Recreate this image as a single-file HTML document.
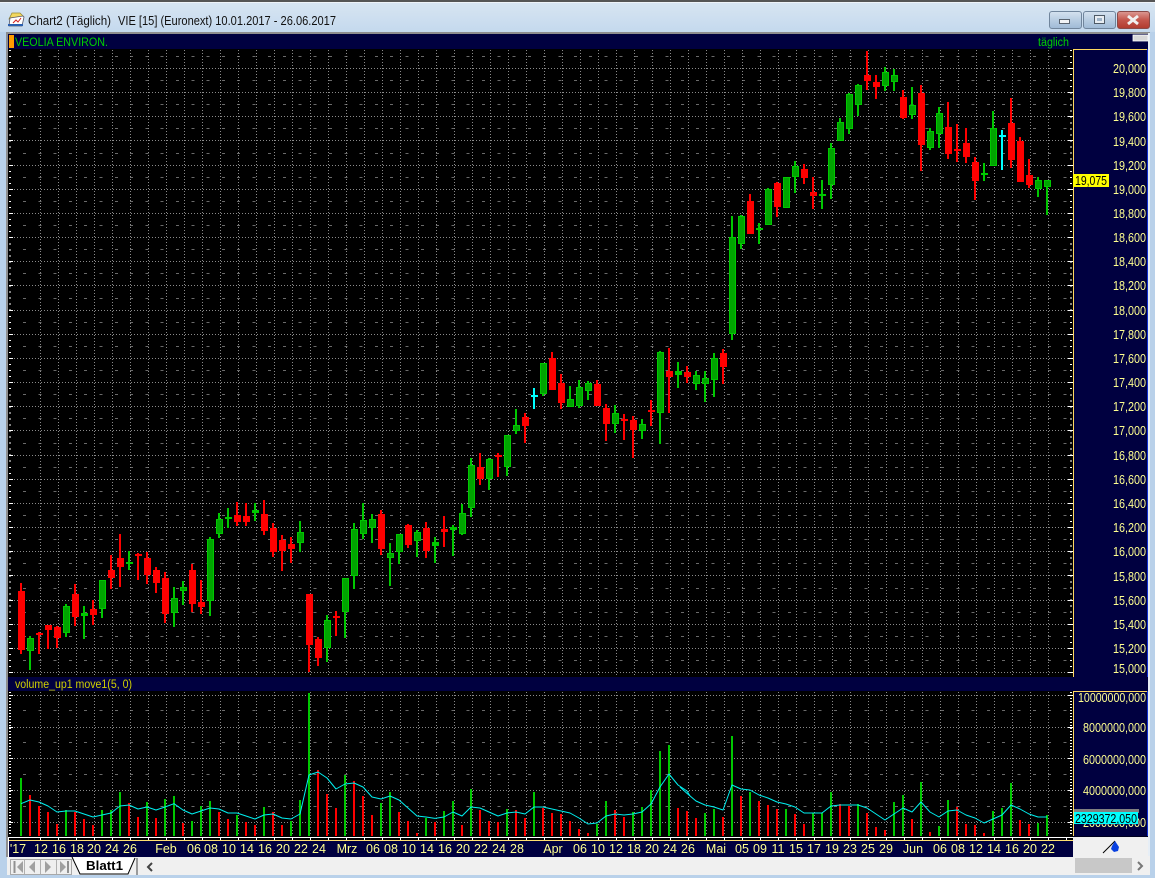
<!DOCTYPE html>
<html><head><meta charset="utf-8"><title>Chart2</title>
<style>html,body{margin:0;padding:0;background:#b9d1ea;overflow:hidden}svg{display:block;width:1155px;height:878px}text{font-family:"Liberation Sans",sans-serif}</style></head>
<body>
<svg xmlns="http://www.w3.org/2000/svg" width="1155" height="878" viewBox="0 0 1155 878">
<defs>
<linearGradient id="tb" x1="0" y1="0" x2="0" y2="1"><stop offset="0" stop-color="#d9e6f2"/><stop offset="1" stop-color="#c4d9ee"/></linearGradient>
<linearGradient id="bt" x1="0" y1="0" x2="0" y2="1"><stop offset="0" stop-color="#d5e2ef"/><stop offset=".5" stop-color="#b8cde2"/><stop offset="1" stop-color="#9fbad6"/></linearGradient>
<linearGradient id="cl" x1="0" y1="0" x2="0" y2="1"><stop offset="0" stop-color="#dc9a94"/><stop offset=".5" stop-color="#c4564c"/><stop offset="1" stop-color="#b03a2e"/></linearGradient>
</defs>
<rect width="1155" height="878" fill="#b9d1ea"/>
<rect y="0" width="1155" height="32" fill="url(#tb)"/>
<rect width="1155" height="2" fill="#555"/><rect y="2" width="1155" height="1" fill="#eef3f8"/>
<!-- title icon -->
<path d="M9 19l3-6h8l3 3-2 3z" fill="#f2d860" stroke="#9a8a30" stroke-width=".8"/>
<path d="M10 18l13-2 1 1-2 9H9z" fill="#fff" stroke="#556" stroke-width=".8"/>
<path d="M13 23l3-3 2 2 3-4" fill="none" stroke="#d02020"/>
<rect x="8" y="24" width="15" height="2" fill="#2a5fb0"/>
<text x="28" y="25" font-size="12.500" fill="#111" textLength="83" lengthAdjust="spacingAndGlyphs">Chart2 (Täglich)</text>
<text x="118" y="25" font-size="12.500" fill="#111" textLength="218" lengthAdjust="spacingAndGlyphs">VIE [15] (Euronext) 10.01.2017 - 26.06.2017</text>
<!-- window buttons -->
<rect x="1049.500" y="11.500" width="32" height="17" rx="2.500" fill="url(#bt)" stroke="#70859c"/>
<rect x="1059.500" y="19.500" width="10" height="4" fill="#f2f4f6" stroke="#5a6470"/>
<rect x="1083.500" y="11.500" width="32" height="17" rx="2.500" fill="url(#bt)" stroke="#70859c"/>
<rect x="1094.500" y="15.500" width="10" height="8" fill="#e8edf2" stroke="#4e5a66"/><rect x="1097" y="18" width="5" height="3" fill="#9fb4c9"/>
<rect x="1117.500" y="11.500" width="32" height="17" rx="2.500" fill="url(#cl)" stroke="#8a4a48"/>
<path d="M1128 16l10 8M1138 16l-10 8" stroke="#f0f0f0" stroke-width="3"/>
<!-- frame -->
<rect x="7" y="32" width="1143" height="843" fill="#f0f0f0"/>
<rect x="6" y="32" width="1144" height="2" fill="#8e8e8e"/>
<rect x="6" y="32" width="2" height="825" fill="#8e8e8e"/>
<rect x="1148" y="33" width="2" height="823" fill="#e6eef6"/>
<!-- chart backgrounds -->
<rect x="8" y="34" width="1140" height="16" fill="#000040"/>
<rect x="8" y="49" width="1065" height="628" fill="#000"/>
<rect x="8" y="677" width="1140" height="14" fill="#000040"/>
<rect x="8" y="691" width="1065" height="149" fill="#000"/>
<rect x="1073" y="49" width="75" height="628" fill="#000040"/>
<rect x="1073" y="691" width="75" height="146" fill="#000040"/>
<path d="M1073.500 50V677M1073 49.500H1147M1073.500 692V836M1073 691.500H1147" stroke="#ffd860" fill="none"/>
<path d="M1147.500 49V677M1147.500 691V837" stroke="#1030d0" fill="none"/>
<path d="M1073 836.500H1148" stroke="#000020"/>
<rect x="1073" y="837" width="75" height="20" fill="#f0f0f0"/>
<rect x="9" y="35" width="5" height="13" fill="#ff9c00"/>
<rect x="1133" y="35" width="15" height="6" fill="#d8d8d8" stroke="#fff" stroke-width=".8"/>
<text x="15" y="46" font-size="11.500" fill="#00d000" textLength="93" lengthAdjust="spacingAndGlyphs">VEOLIA ENVIRON.</text>
<text x="1038" y="46" font-size="11.500" fill="#00d000" textLength="31" lengthAdjust="spacingAndGlyphs">täglich</text>
<text x="15" y="688" font-size="11.500" fill="#d0d000" textLength="117" lengthAdjust="spacingAndGlyphs">volume_up1 move1(5, 0)</text>
<!-- grid -->
<g fill="none" stroke="#8a8a8a">
<path stroke-dasharray="1 2" d="M14 68.500H1072M14 92.500H1072M14 116.500H1072M14 140.500H1072M14 165.500H1072M14 189.500H1072M14 213.500H1072M14 237.500H1072M14 261.500H1072M14 285.500H1072M14 310.500H1072M14 334.500H1072M14 358.500H1072M14 382.500H1072M14 406.500H1072M14 430.500H1072M14 455.500H1072M14 479.500H1072M14 503.500H1072M14 527.500H1072M14 551.500H1072M14 575.500H1072M14 600.500H1072M14 624.500H1072M14 648.500H1072M14 672.500H1072M14 695.500H1072M14 727.500H1072M14 758.500H1072M14 790.500H1072M14 822.500H1072"/>
<path stroke="#6a6a6a" shape-rendering="crispEdges" stroke-dasharray="3 12.300" d="M23 56.500H1068M23 80.500H1068M23 104.500H1068M23 128.500H1068M23 153.500H1068M23 177.500H1068M23 201.500H1068M23 225.500H1068M23 249.500H1068M23 273.500H1068M23 298.500H1068M23 322.500H1068M23 346.500H1068M23 370.500H1068M23 394.500H1068M23 418.500H1068M23 443.500H1068M23 467.500H1068M23 491.500H1068M23 515.500H1068M23 539.500H1068M23 563.500H1068M23 588.500H1068M23 612.500H1068M23 636.500H1068M23 660.500H1068M23 710.500H1068M23 742.500H1068M23 774.500H1068M23 806.500H1068"/>
<path stroke-dasharray="1 2" d="M40.500 50V676M58.500 50V676M76.500 50V676M94.500 50V676M112.500 50V676M130.500 50V676M148.500 50V676M166.500 50V676M184.500 50V676M202.500 50V676M220.500 50V676M238.500 50V676M256.500 50V676M274.500 50V676M292.500 50V676M310.500 50V676M328.500 50V676M346.500 50V676M364.500 50V676M382.500 50V676M400.500 50V676M418.500 50V676M436.500 50V676M454.500 50V676M472.500 50V676M490.500 50V676M508.500 50V676M526.500 50V676M544.500 50V676M562.500 50V676M580.500 50V676M598.500 50V676M616.500 50V676M634.500 50V676M652.500 50V676M670.500 50V676M688.500 50V676M706.500 50V676M724.500 50V676M742.500 50V676M760.500 50V676M778.500 50V676M796.500 50V676M814.500 50V676M832.500 50V676M850.500 50V676M868.500 50V676M886.500 50V676M904.500 50V676M922.500 50V676M940.500 50V676M958.500 50V676M976.500 50V676M994.500 50V676M1012.500 50V676M1030.500 50V676M1048.500 50V676"/>
<path stroke-dasharray="1 2" d="M40.500 692V836M58.500 692V836M76.500 692V836M94.500 692V836M112.500 692V836M130.500 692V836M148.500 692V836M166.500 692V836M184.500 692V836M202.500 692V836M220.500 692V836M238.500 692V836M256.500 692V836M274.500 692V836M292.500 692V836M310.500 692V836M328.500 692V836M346.500 692V836M364.500 692V836M382.500 692V836M400.500 692V836M418.500 692V836M436.500 692V836M454.500 692V836M472.500 692V836M490.500 692V836M508.500 692V836M526.500 692V836M544.500 692V836M562.500 692V836M580.500 692V836M598.500 692V836M616.500 692V836M634.500 692V836M652.500 692V836M670.500 692V836M688.500 692V836M706.500 692V836M724.500 692V836M742.500 692V836M760.500 692V836M778.500 692V836M796.500 692V836M814.500 692V836M832.500 692V836M850.500 692V836M868.500 692V836M886.500 692V836M904.500 692V836M922.500 692V836M940.500 692V836M958.500 692V836M976.500 692V836M994.500 692V836M1012.500 692V836M1030.500 692V836M1048.500 692V836"/>
<!-- ticks -->
<g stroke="#fff">
<path stroke-width="2" shape-rendering="crispEdges" stroke-dasharray="1 5.040" d="M10 50V672"/>
<path d="M9 68.500H13M9 92.500H13M9 116.500H13M9 140.500H13M9 165.500H13M9 189.500H13M9 213.500H13M9 237.500H13M9 261.500H13M9 285.500H13M9 310.500H13M9 334.500H13M9 358.500H13M9 382.500H13M9 406.500H13M9 430.500H13M9 455.500H13M9 479.500H13M9 503.500H13M9 527.500H13M9 551.500H13M9 575.500H13M9 600.500H13M9 624.500H13M9 648.500H13M9 672.500H13M9 695.500H13M9 727.500H13M9 758.500H13M9 790.500H13M9 822.500H13"/>
<path stroke-width="2" stroke-dasharray="1 2" d="M10 692V836"/>
<path stroke-width="2" shape-rendering="crispEdges" stroke-dasharray="1 5.040" d="M1071 50V672"/>
<path d="M1068 68.500H1073M1068 92.500H1073M1068 116.500H1073M1068 140.500H1073M1068 165.500H1073M1068 189.500H1073M1068 213.500H1073M1068 237.500H1073M1068 261.500H1073M1068 285.500H1073M1068 310.500H1073M1068 334.500H1073M1068 358.500H1073M1068 382.500H1073M1068 406.500H1073M1068 430.500H1073M1068 455.500H1073M1068 479.500H1073M1068 503.500H1073M1068 527.500H1073M1068 551.500H1073M1068 575.500H1073M1068 600.500H1073M1068 624.500H1073M1068 648.500H1073M1068 672.500H1073M1068 695.500H1073M1068 727.500H1073M1068 758.500H1073M1068 790.500H1073M1068 822.500H1073"/>
<path stroke-width="2" stroke-dasharray="1 2" d="M1071 692V836"/>
<path d="M8 837.500H1073"/>
<path stroke-dasharray="1 17" stroke-width="2" d="M40 839H1073"/>
</g>
</g>
<!-- candles: wicks -->
<g fill="none">
<path stroke="#00c800" stroke-width="2" d="M30 636V670M66 604V637M84 606V639M102 580V618M129 551V570M174 587V627M183 581V605M210 537V616M219 513V538M228 508V528M255 503V521M300 521V552M327 615V662M345 578V638M354 523V589M363 503V539M372 514V543M390 543V586M399 534V564M417 530V557M435 537V563M453 525V556M462 504V535M471 458V517M489 458V490M507 435V476M516 409V434M543 363V396M570 386V407M579 380V408M588 381V400M615 405V433M642 419V439M660 351V444M678 362V388M696 371V390M705 371V402M714 353V397M732 216V340M741 215V249M759 223V244M768 188V225M786 177V208M795 161V193M822 180V209M831 143V199M840 118V141M849 93V134M858 84V116M885 67V91M894 69V91M912 87V119M930 128V150M939 107V148M984 163V181M993 111V166M1038 177V197M1047 180V215"/>
<path stroke="#ff0000" stroke-width="2" d="M21 583V654M39 632V654M48 625V649M57 626V648M75 584V626M93 600V625M111 555V589M120 534V587M138 553V580M147 552V584M156 567V593M165 572V623M192 564V612M201 580V614M237 502V526M246 503V526M264 500V535M273 523V557M282 535V571M291 537V563M309 594V672M318 637V666M336 611V636M381 510V555M408 524V548M426 522V558M444 516V547M480 453V485M498 453V477M525 413V443M552 352V390M561 374V409M597 380V406M606 404V441M624 414V440M633 416V458M651 400V426M669 348V413M687 366V383M723 349V384M750 194V234M777 182V217M804 164V184M813 177V209M867 51V90M876 75V99M903 90V119M921 85V171M948 102V159M957 124V162M966 128V163M975 157V200M1011 98V168M1020 137V182M1029 159V188"/>
<path stroke="#00ffff" stroke-width="2" d="M534 388V409M1002 130V170"/>
<!-- bodies -->
<path stroke="#ff0000" stroke-width="7" d="M21.500 591V650M39.500 633V635M48.500 625V630M57.500 627V638M75.500 594V617M93.500 609V615M111.500 570V578M120.500 558V567M138.500 554V556M147.500 558V575M156.500 570V583M165.500 578V614M192.500 570V604M201.500 602V607M237.500 515V522M246.500 516V522M264.500 514V531M273.500 528V552M282.500 540V551M291.500 544V549M309.500 594V645M318.500 639V658M336.500 616V618M381.500 514V549M408.500 525V545M426.500 528V551M444.500 529V532M480.500 467V479M498.500 455V457M525.500 417V426M552.500 358V390M561.500 383V403M597.500 384V406M606.500 408V424M624.500 419V421M633.500 420V430M651.500 410V412M669.500 371V377M687.500 372V377M723.500 353V367M750.500 201V234M777.500 183V207M804.500 169V178M813.500 192V196M867.500 75V81M876.500 82V87M903.500 97V118M921.500 93V145M948.500 127V154M957.500 149V151M966.500 143V157M975.500 162V181M1011.500 123V160M1020.500 141V182M1029.500 175V185"/>
<path stroke="#00ffff" stroke-width="7" d="M534.500 395V397M1002.500 135V137"/>
<path stroke="#00c800" stroke-width="7" d="M30.500 638V651M66.500 606V633M84.500 613V616M102.500 580V609M129.500 562V564M174.500 598V613M183.500 587V591M210.500 539V601M219.500 519V534M228.500 517V519M255.500 510V513M300.500 532V543M327.500 620V648M345.500 578V612M354.500 529V576M363.500 520V534M372.500 519V528M390.500 553V558M399.500 534V552M417.500 532V541M435.500 542V546M453.500 527V530M462.500 513V534M471.500 465V508M489.500 459V479M507.500 435V467M516.500 425V431M543.500 363V394M570.500 399V407M579.500 387V406M588.500 383V391M615.500 413V424M642.500 424V431M660.500 352V413M678.500 371V375M696.500 375V384M705.500 378V384M714.500 358V380M732.500 237V334M741.500 216V244M759.500 228V230M768.500 189V225M786.500 177V208M795.500 166V177M822.500 194V196M831.500 148V185M840.500 122V141M849.500 94V129M858.500 85V105M885.500 72V86M894.500 75V82M912.500 105V115M930.500 131V148M939.500 113V134M984.500 173V175M993.500 128V166M1038.500 180V189M1047.500 180V187"/>
<path stroke="#00a400" stroke-width="5" d="M30.500 639V650M66.500 607V632M102.500 581V608M174.500 599V612M183.500 588V590M210.500 540V600M219.500 520V533M300.500 533V542M327.500 621V647M345.500 579V611M354.500 530V575M363.500 521V533M372.500 520V527M390.500 554V557M399.500 535V551M417.500 533V540M462.500 514V533M471.500 466V507M489.500 460V478M507.500 436V466M516.500 426V430M543.500 364V393M570.500 400V406M579.500 388V405M588.500 384V390M615.500 414V423M642.500 425V430M660.500 353V412M696.500 376V383M705.500 379V383M714.500 359V379M732.500 238V333M741.500 217V243M768.500 190V224M786.500 178V207M795.500 167V176M831.500 149V184M840.500 123V140M849.500 95V128M858.500 86V104M885.500 73V85M894.500 76V81M912.500 106V114M930.500 132V147M939.500 114V133M993.500 129V165M1038.500 181V188M1047.500 181V186"/>
</g>
<!-- volume bars -->
<g fill="none" stroke-width="6" transform="translate(0 690) scale(.3333333)">
<path stroke="#00c800" d="M63 264V438M198 360V438M306 360V438M333 360V438M360 306V438M441 336V438M495 327V438M522 318V438M576 393V438M603 348V438M630 333V438M711 375V438M792 351V438M873 393V438M900 330V438M927 9V438M1035 255V438"/>
<path stroke="#ff0000" d="M90 315V438M117 348V438M144 366V438M171 402V438M225 366V438M252 387V438M279 405V438M387 339V438M414 381V438M468 384V438M549 399V438M657 366V438M684 387V438M738 396V438M765 405V438M819 366V438M846 405V438M954 240V438M981 312V438M1008 354V438"/>
</g>
<g fill="none" stroke-width="6" transform="translate(340 690) scale(.3333333)">
<path stroke="#00c800" d="M123 339V438M150 306V438M258 384V438M312 363V438M339 333V438M393 297V438M501 357V438M582 306V438M771 402V438M798 333V438M879 366V438M906 351V438M933 300V438M960 183V438M987 165V438"/>
<path stroke="#ff0000" d="M42 273V438M69 318V438M96 375V438M177 366V438M204 393V438M231 429V438M285 396V438M366 405V438M420 360V438M447 393V438M474 396V438M528 360V438M555 384V438M609 354V438M636 369V438M663 372V438M690 393V438M717 417V438M744 429V438M825 360V438M852 381V438M1014 354V438M1041 363V438"/>
</g>
<g fill="none" stroke-width="6" transform="translate(680 690) scale(.3333333)">
<path stroke="#00c800" d="M75 369V438M102 357V438M156 138V438M210 306V438M318 357V438M399 369V438M426 369V438M453 306V438M534 342V438M642 336V438M669 315V438M723 276V438M777 408V438M804 330V438M939 363V438M966 354V438M993 279V438M1074 399V438M1101 375V438"/>
<path stroke="#ff0000" d="M48 384V438M129 381V438M183 318V438M237 333V438M264 345V438M291 357V438M345 372V438M372 402V438M480 342V438M507 348V438M561 369V438M588 411V438M615 420V438M696 387V438M750 426V438M831 351V438M858 402V438M885 405V438M912 429V438M1020 390V438M1047 402V438"/>
</g>
<!-- MA -->
<g fill="none" stroke="#00f0f0" stroke-width="3" stroke-linejoin="round">
<polyline transform="translate(0 690) scale(.3333333)" points="63,341 90,330 117,336 144,348 171,366 198,363 225,363 252,372 279,381 306,375 333,369 360,348 387,345 414,357 441,351 468,360 495,351 522,341 549,360 576,372 603,363 630,354 657,357 684,369 711,369 738,378 765,387 792,375 819,372 846,384 873,387 900,372 927,255 954,246 981,264 1008,297 1035,282"/>
<polyline transform="translate(340 690) scale(.3333333)" points="15,282 42,279 69,291 96,321 123,327 150,318 177,330 204,354 231,378 258,381 285,385 312,381 339,366 366,378 393,351 420,354 447,366 474,378 501,369 528,366 555,372 582,351 609,351 636,357 663,363 690,369 717,384 744,402 771,399 798,378 825,372 852,375 879,372 906,366 933,342 960,291 987,252 1014,285 1041,303 1050,318"/>
<polyline transform="translate(680 690) scale(.3333333)" points="0,291 21,310 48,333 75,345 102,351 129,360 156,285 183,297 210,300 237,315 264,324 291,336 318,342 345,351 372,369 399,369 426,369 453,348 480,345 507,345 534,345 561,354 588,372 615,390 642,372 669,354 696,366 723,336 750,366 777,381 804,363 831,360 858,375 885,384 912,399 939,387 966,375 993,345 1020,357 1047,372 1074,381 1101,381"/>
</g>
<!-- price axis -->
<g font-size="13" fill="#ffff90" text-anchor="end">
<text x="1146" y="73" textLength="33" lengthAdjust="spacingAndGlyphs">20,000</text>
<text x="1146" y="97" textLength="33" lengthAdjust="spacingAndGlyphs">19,800</text>
<text x="1146" y="121" textLength="33" lengthAdjust="spacingAndGlyphs">19,600</text>
<text x="1146" y="146" textLength="33" lengthAdjust="spacingAndGlyphs">19,400</text>
<text x="1146" y="170" textLength="33" lengthAdjust="spacingAndGlyphs">19,200</text>
<text x="1146" y="194" textLength="33" lengthAdjust="spacingAndGlyphs">19,000</text>
<text x="1146" y="218" textLength="33" lengthAdjust="spacingAndGlyphs">18,800</text>
<text x="1146" y="242" textLength="33" lengthAdjust="spacingAndGlyphs">18,600</text>
<text x="1146" y="266" textLength="33" lengthAdjust="spacingAndGlyphs">18,400</text>
<text x="1146" y="290" textLength="33" lengthAdjust="spacingAndGlyphs">18,200</text>
<text x="1146" y="315" textLength="33" lengthAdjust="spacingAndGlyphs">18,000</text>
<text x="1146" y="339" textLength="33" lengthAdjust="spacingAndGlyphs">17,800</text>
<text x="1146" y="363" textLength="33" lengthAdjust="spacingAndGlyphs">17,600</text>
<text x="1146" y="387" textLength="33" lengthAdjust="spacingAndGlyphs">17,400</text>
<text x="1146" y="411" textLength="33" lengthAdjust="spacingAndGlyphs">17,200</text>
<text x="1146" y="435" textLength="33" lengthAdjust="spacingAndGlyphs">17,000</text>
<text x="1146" y="460" textLength="33" lengthAdjust="spacingAndGlyphs">16,800</text>
<text x="1146" y="484" textLength="33" lengthAdjust="spacingAndGlyphs">16,600</text>
<text x="1146" y="508" textLength="33" lengthAdjust="spacingAndGlyphs">16,400</text>
<text x="1146" y="532" textLength="33" lengthAdjust="spacingAndGlyphs">16,200</text>
<text x="1146" y="556" textLength="33" lengthAdjust="spacingAndGlyphs">16,000</text>
<text x="1146" y="581" textLength="33" lengthAdjust="spacingAndGlyphs">15,800</text>
<text x="1146" y="605" textLength="33" lengthAdjust="spacingAndGlyphs">15,600</text>
<text x="1146" y="629" textLength="33" lengthAdjust="spacingAndGlyphs">15,400</text>
<text x="1146" y="653" textLength="33" lengthAdjust="spacingAndGlyphs">15,200</text>
<text x="1146" y="673" textLength="33" lengthAdjust="spacingAndGlyphs">15,000</text>
<text x="1146" y="702" textLength="68" lengthAdjust="spacingAndGlyphs">10000000,000</text>
<text x="1146" y="732" textLength="63" lengthAdjust="spacingAndGlyphs">8000000,000</text>
<text x="1146" y="764" textLength="63" lengthAdjust="spacingAndGlyphs">6000000,000</text>
<text x="1146" y="795" textLength="63" lengthAdjust="spacingAndGlyphs">4000000,000</text>
<text x="1146" y="827" textLength="63" lengthAdjust="spacingAndGlyphs">2000000,000</text>
</g>
<rect x="1073" y="174" width="36" height="13" fill="#ffff00"/>
<text x="1075" y="185" font-size="13" fill="#000" textLength="32" lengthAdjust="spacingAndGlyphs">19,075</text>
<rect x="1074" y="809" width="65" height="4" fill="#808080"/>
<rect x="1074" y="812" width="64" height="12" fill="#00ffff"/>
<text x="1075" y="823" font-size="13" fill="#000" textLength="62" lengthAdjust="spacingAndGlyphs">2329372,050</text>
<!-- date bar -->
<rect x="8" y="840" width="1065" height="17" fill="#000040"/>
<path d="M8 840.500H1073" stroke="#ffe070"/>
<path d="M8.500 837V857" stroke="#fff"/>
<g font-size="12.500" fill="#ffff90" text-anchor="middle">
<text x="18" y="853">'17</text><text x="41" y="853">12</text><text x="59" y="853">16</text><text x="77" y="853">18</text><text x="94" y="853">20</text><text x="112" y="853">24</text><text x="130" y="853">26</text><text x="166" y="853">Feb</text><text x="194" y="853">06</text><text x="211" y="853">08</text><text x="229" y="853">10</text><text x="247" y="853">14</text><text x="265" y="853">16</text><text x="283" y="853">20</text><text x="301" y="853">22</text><text x="319" y="853">24</text><text x="347" y="853">Mrz</text><text x="373" y="853">06</text><text x="391" y="853">08</text><text x="409" y="853">10</text><text x="427" y="853">14</text><text x="445" y="853">16</text><text x="463" y="853">20</text><text x="481" y="853">22</text><text x="499" y="853">24</text><text x="517" y="853">28</text><text x="553" y="853">Apr</text><text x="580" y="853">06</text><text x="598" y="853">10</text><text x="616" y="853">12</text><text x="634" y="853">18</text><text x="652" y="853">20</text><text x="670" y="853">24</text><text x="688" y="853">26</text><text x="716" y="853">Mai</text><text x="742" y="853">05</text><text x="760" y="853">09</text><text x="778" y="853">11</text><text x="796" y="853">15</text><text x="814" y="853">17</text><text x="832" y="853">19</text><text x="850" y="853">23</text><text x="868" y="853">25</text><text x="886" y="853">29</text><text x="913" y="853">Jun</text><text x="940" y="853">06</text><text x="958" y="853">08</text><text x="976" y="853">12</text><text x="994" y="853">14</text><text x="1012" y="853">16</text><text x="1030" y="853">20</text><text x="1048" y="853">22</text>
</g>
<!-- panel icon -->
<path d="M1103 853L1115 841" stroke="#000" stroke-width="1"/>
<path d="M1112 846l3-5 4 6-1 4-4 1-3-3z" fill="#0840e0"/>
<!-- tab bar -->
<rect x="7" y="857" width="1143" height="18" fill="#f0f0f0"/>
<rect x="0" y="875" width="1155" height="3" fill="#b9d1ea"/>
<rect x="10.500" y="859.500" width="61" height="15" fill="#efefef" stroke="#a8a8a8"/>
<path d="M24.500 860V874M40.500 860V874M56.500 860V874" stroke="#b0b0b0"/>
<path d="M14.500 861V873" stroke="#909090" stroke-width="2"/><path d="M23 861l-6 6 6 6z" fill="#a0a0a0"/>
<path d="M35 861l-6 6 6 6z" fill="#a0a0a0"/>
<path d="M45 861l6 6-6 6z" fill="#a0a0a0"/>
<path d="M60 861l6 6-6 6z" fill="#a0a0a0"/><path d="M68 861V873" stroke="#909090" stroke-width="2"/>
<path d="M72 857L80 874H128L135 858" fill="#fff" stroke="#000"/>
<text x="86" y="870" font-size="12.500" font-weight="700" fill="#000" textLength="37" lengthAdjust="spacingAndGlyphs">Blatt1</text>
<path d="M137 858V875" stroke="#9a9a9a" stroke-width="2"/>
<path d="M152 863l-4 4 4 4" fill="none" stroke="#444" stroke-width="2"/>
<rect x="1075" y="858" width="57" height="15" fill="#c8c8c8"/>
<path d="M1138 862l4 4-4 4" fill="none" stroke="#777" stroke-width="2"/>
</svg>
</body></html>
